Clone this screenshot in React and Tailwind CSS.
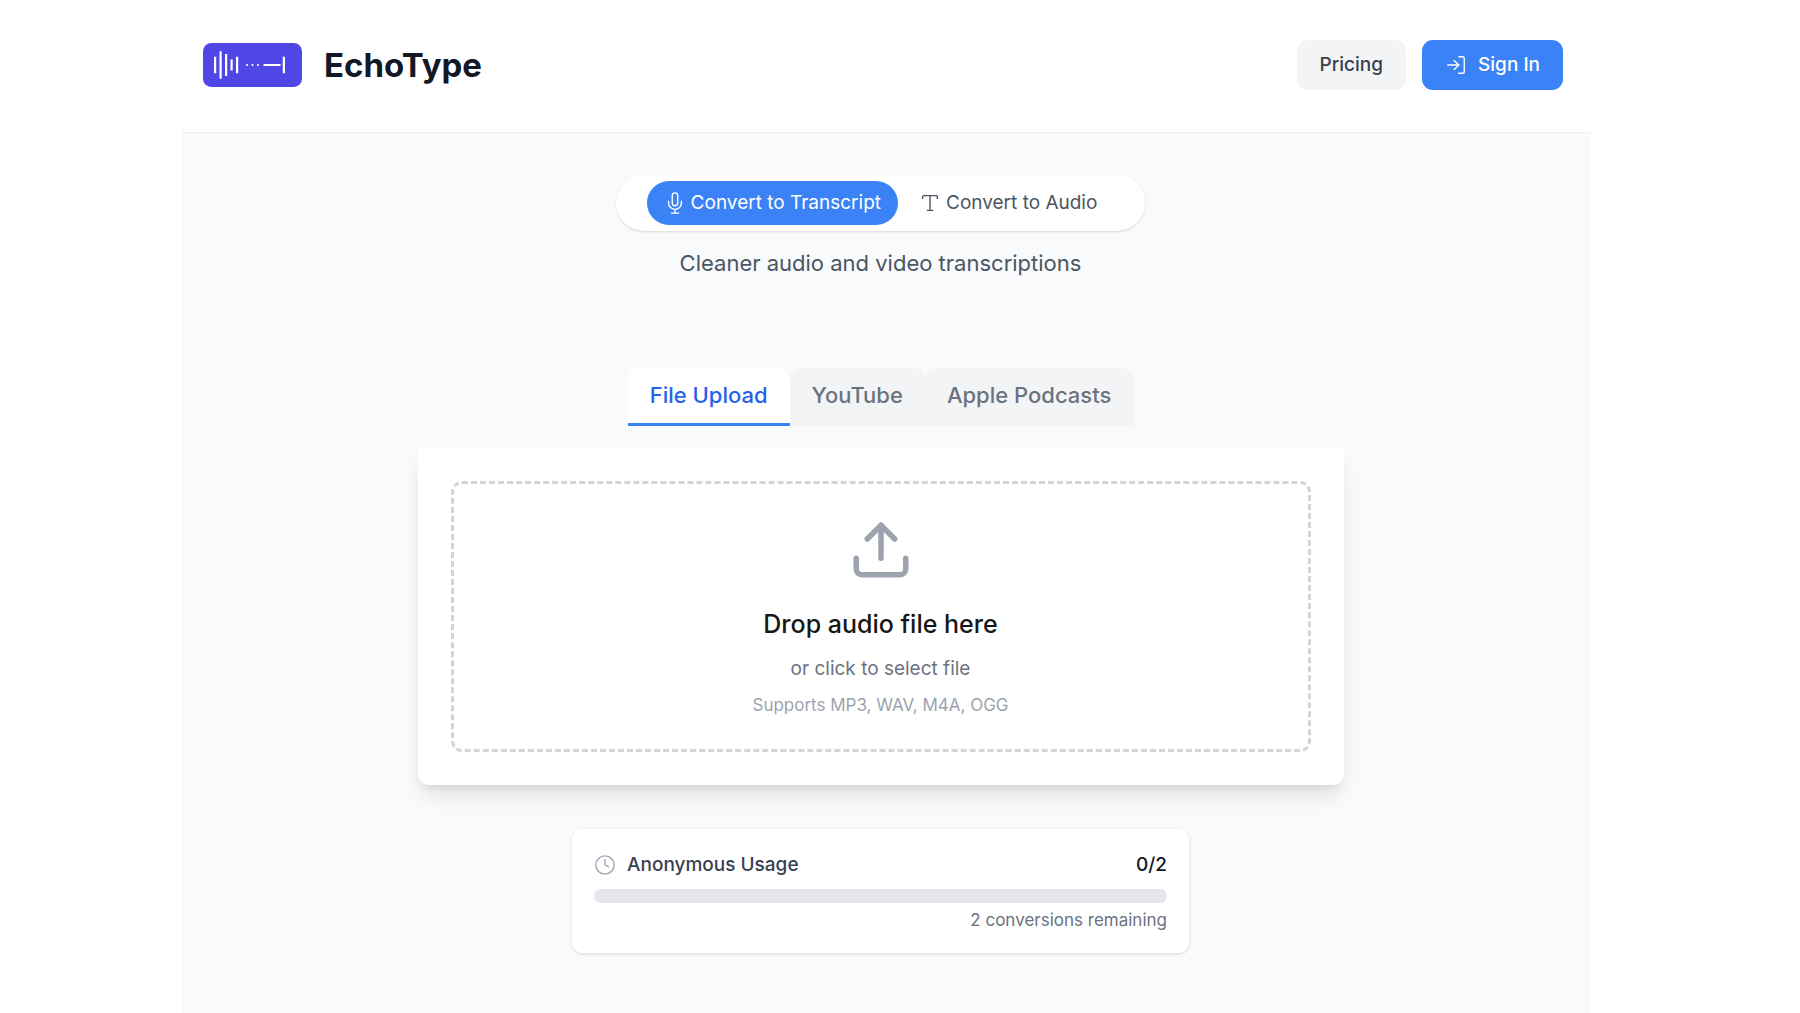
import React, { useState } from 'react'
import { LogIn, Upload, Type, Clock } from 'lucide-react';

const SOURCES = ['File Upload', 'YouTube', 'Apple Podcasts'];

const Logo = () => (
  <svg viewBox="0 0 180 80" className="w-[99px] h-11" aria-hidden="true">
    <rect width="180" height="80" rx="15" fill="#4f46e5" />
    <g stroke="#fff" strokeWidth="4">
      {/* sound wave */}
      <path d="M22 25V55M32 15V65M42 20V60M52 30V50M62 25V55" />
      {/* text line and cursor */}
      <path d="M110 40H141M147 25V55" />
    </g>
    <g fill="#fff">
      <circle cx="80" cy="40" r="2" />
      <circle cx="90" cy="40" r="2" />
      <circle cx="100" cy="40" r="2" />
    </g>
  </svg>
);

const MicIcon = () => (
  <svg viewBox="0 0 24 24" className="w-[22px] h-[22px]" fill="none" stroke="currentColor"
    strokeWidth="1.5" strokeLinecap="round" strokeLinejoin="round" aria-hidden="true">
    <path d="M12 1a3 3 0 0 0-3 3v8a3 3 0 0 0 6 0V4a3 3 0 0 0-3-3z" />
    <path d="M19 10v2a7 7 0 0 1-14 0v-2" />
    <path d="M12 19v4M8 23h8" />
  </svg>
);

const Header = () => (
  <header className="flex items-center justify-between h-[133px] pl-[21px] pr-7 pb-[2px] bg-white border-b border-[#eff0f2]">
    <div className="flex items-center gap-[22px]">
      <Logo />
      <h1 className="text-[33px] leading-[44px] font-bold text-[#111827]">EchoType</h1>
    </div>
    <nav className="flex items-center gap-4 text-[19px] leading-7 font-medium">
      <a href="#pricing" className="px-[23px] py-[11px] rounded-[11px] bg-[#f3f4f6] text-[#374151]">Pricing</a>
      <button className="flex items-center gap-[11px] px-[23px] py-[11px] rounded-[11px] bg-[#3b82f6] text-white">
        <LogIn size={22} strokeWidth={1.5} />
        Sign In
      </button>
    </nav>
  </header>
);

const Dropzone = () => (
  <div className="w-full max-w-[926px] mt-[22px] p-[33px] bg-white rounded-b-[11px] shadow-[0_14px_21px_-4px_rgba(0,0,0,0.1),0_6px_8px_-5px_rgba(0,0,0,0.1)]">
    <button className="flex flex-col items-center w-full p-[33px] border-3 border-dashed border-[#d1d5db] rounded-[11px]">
      <Upload size={66} className="text-[#9ca3af]" />
      <span className="mt-[22px] text-[25px] leading-[39px] font-medium text-[#171717]">Drop audio file here</span>
      <span className="mt-[11px] text-[19px] leading-7 text-[#6b7280]">or click to select file</span>
      <span className="mt-[11px] text-[17px] leading-[22px] text-[#9ca3af]">Supports MP3, WAV, M4A, OGG</span>
    </button>
  </div>
);

const Usage = ({ used, total }) => (
  <div className="w-full max-w-[617px] mt-11 p-[22px] bg-white rounded-[11px] shadow-[0_1px_4px_rgba(0,0,0,0.1),0_1px_3px_-1px_rgba(0,0,0,0.1)]">
    <div className="flex items-center justify-between text-[19px] leading-7 font-medium">
      <div className="flex items-center gap-[11px] text-[#374151]">
        <Clock size={22} strokeWidth={1.5} className="text-[#9ca3af]" />
        Anonymous Usage
      </div>
      <span className="text-[#111827]">{used}/{total}</span>
    </div>
    <div className="h-[14px] mt-[10px] rounded-full bg-[#e5e7eb] overflow-hidden">
      <div className="h-full bg-[#3b82f6]" style={{ width: `${(used / total) * 100}%` }}></div>
    </div>
    <p className="mt-[6px] text-right text-[17px] leading-[22px] text-[#6b7280]">{total - used} conversions remaining</p>
  </div>
);

const App = () => {
  const [mode, setMode] = useState('transcript');
  const [source, setSource] = useState('File Upload');

  const modeClass = (name) =>
    mode === name ? 'bg-[#3b82f6] text-white' : 'text-[#4b5563]';

  return (
    <div className="min-h-screen flex flex-col bg-white pl-[182px] pr-[209px] font-['Inter',sans-serif]">
      <Header />
      <main className="flex-1 flex flex-col items-center bg-[#f9fafc] pt-[42px] pr-3 pb-[58px]">
        {/* Mode switch */}
        <div className="flex justify-center w-full max-w-[529px] px-[28px] py-[6px] gap-1 bg-white rounded-full shadow-sm text-[19px] leading-7">
          <button onClick={() => setMode('transcript')}
            className={`flex items-center gap-[5px] px-[17px] py-2 rounded-full ${modeClass('transcript')}`}>
            <MicIcon />
            Convert to Transcript
          </button>
          <button onClick={() => setMode('audio')}
            className={`flex items-center gap-[5px] px-[17px] py-2 rounded-full ${modeClass('audio')}`}>
            <Type size={22} strokeWidth={1.5} />
            Convert to Audio
          </button>
        </div>
        <p className="mt-4 text-[22px] leading-[33px] text-[#4b5563]">Cleaner audio and video transcriptions</p>

        {/* Source tabs */}
        <div className="flex mt-[88px] text-[22px] leading-[33px] font-medium" role="tablist">
          {SOURCES.map(name => (
            <button key={name} role="tab" aria-selected={source === name} onClick={() => setSource(name)}
              className={`px-[22px] py-[11px] rounded-t-[11px] border-b-3 ${source === name ? 'bg-white text-[#2563eb] border-[#3b82f6]' : 'bg-[#f3f4f6] text-[#6b7280] border-[#f3f4f6]'}`}>
              {name}
            </button>
          ))}
        </div>

        <Dropzone />
        <Usage used={0} total={2} />
      </main>
    </div>
  )
}

export default App
